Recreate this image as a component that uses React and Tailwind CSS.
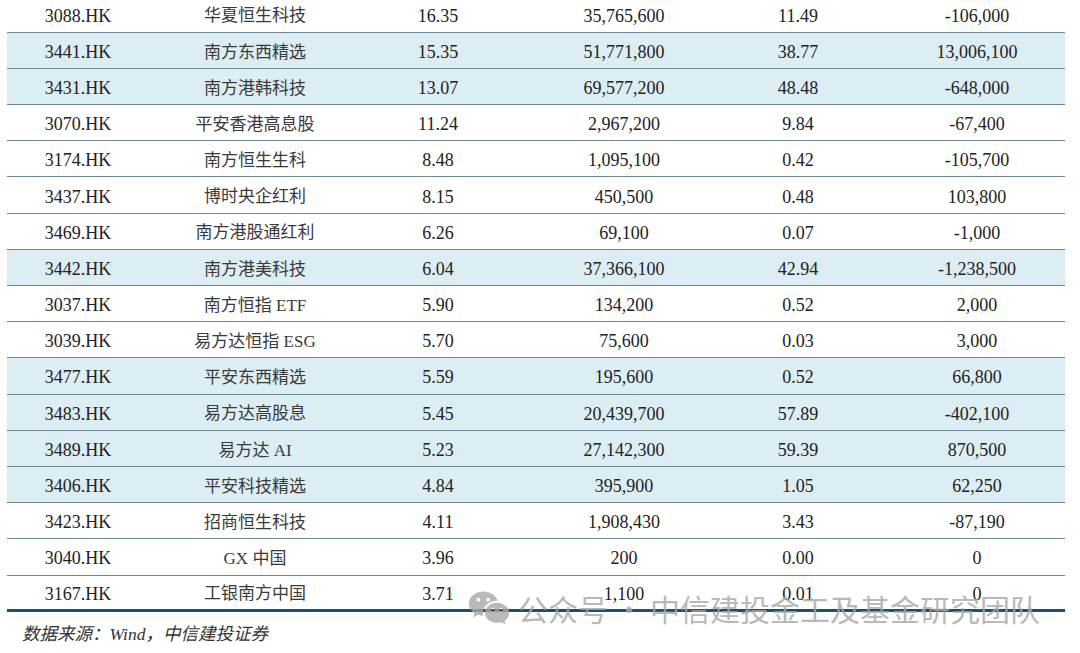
import React from "react";
import { RiWechatFill } from "react-icons/ri";

const rows = [
  ["3088.HK", "华夏恒生科技", "16.35", "35,765,600", "11.49", "-106,000", false],
  ["3441.HK", "南方东西精选", "15.35", "51,771,800", "38.77", "13,006,100", true],
  ["3431.HK", "南方港韩科技", "13.07", "69,577,200", "48.48", "-648,000", true],
  ["3070.HK", "平安香港高息股", "11.24", "2,967,200", "9.84", "-67,400", false],
  ["3174.HK", "南方恒生生科", "8.48", "1,095,100", "0.42", "-105,700", false],
  ["3437.HK", "博时央企红利", "8.15", "450,500", "0.48", "103,800", false],
  ["3469.HK", "南方港股通红利", "6.26", "69,100", "0.07", "-1,000", false],
  ["3442.HK", "南方港美科技", "6.04", "37,366,100", "42.94", "-1,238,500", true],
  ["3037.HK", "南方恒指 ETF", "5.90", "134,200", "0.52", "2,000", false],
  ["3039.HK", "易方达恒指 ESG", "5.70", "75,600", "0.03", "3,000", false],
  ["3477.HK", "平安东西精选", "5.59", "195,600", "0.52", "66,800", true],
  ["3483.HK", "易方达高股息", "5.45", "20,439,700", "57.89", "-402,100", true],
  ["3489.HK", "易方达 AI", "5.23", "27,142,300", "59.39", "870,500", true],
  ["3406.HK", "平安科技精选", "4.84", "395,900", "1.05", "62,250", true],
  ["3423.HK", "招商恒生科技", "4.11", "1,908,430", "3.43", "-87,190", false],
  ["3040.HK", "GX 中国", "3.96", "200", "0.00", "0", false],
  ["3167.HK", "工银南方中国", "3.71", "1,100", "0.01", "0", false],
];

const font = { fontFamily: '"Liberation Serif", "Noto Sans CJK SC", serif' };

export default function App() {
  return (
    <div className="relative w-[1080px] h-[653px] overflow-hidden bg-white text-[#222]" style={font}>
      <div className="ml-[7px] mt-[-3.5px] w-[1058px]">
        {rows.map((r, i) => {
          const last = i === rows.length - 1;
          return (
            <div
              key={r[0]}
              className={`grid grid-cols-[142px_212px_154px_218px_130px_202px] items-center h-[36.2px] pt-[4px] text-[18px] ${
                r[6] ? "bg-[#dcedf4]" : "bg-white"
              } ${last ? "border-b-[3px] border-[#1d4f6e]" : "border-b-[1.5px] border-[#6d8797]"}`}
            >
              <div className="text-center">{r[0]}</div>
              <div className="text-center text-[#3a3a3a] text-[17px]">{r[1]}</div>
              <div className="text-center">{r[2]}</div>
              <div className="text-center">{r[3]}</div>
              <div className="text-center">{r[4]}</div>
              <div className="text-center pl-[26px]">{r[5]}</div>
            </div>
          );
        })}
      </div>

      <div className="pl-[22px] pt-[9px] italic text-[17.5px] text-[#333]">
        数据来源：Wind，中信建投证券
      </div>

      {/* watermark */}
      <div className="absolute left-[464px] top-[586px] flex items-center gap-[4px] text-[#a8a8a8] opacity-80 pointer-events-none">
        <RiWechatFill className="w-[50px] h-[44px]" />
        <span
          className="text-[30px] leading-none"
          style={{ fontFamily: '"Noto Sans CJK SC", sans-serif' }}
        >
          公众号<span className="mx-[6px]">·</span>中信建投金工及基金研究团队
        </span>
      </div>
    </div>
  );
}
